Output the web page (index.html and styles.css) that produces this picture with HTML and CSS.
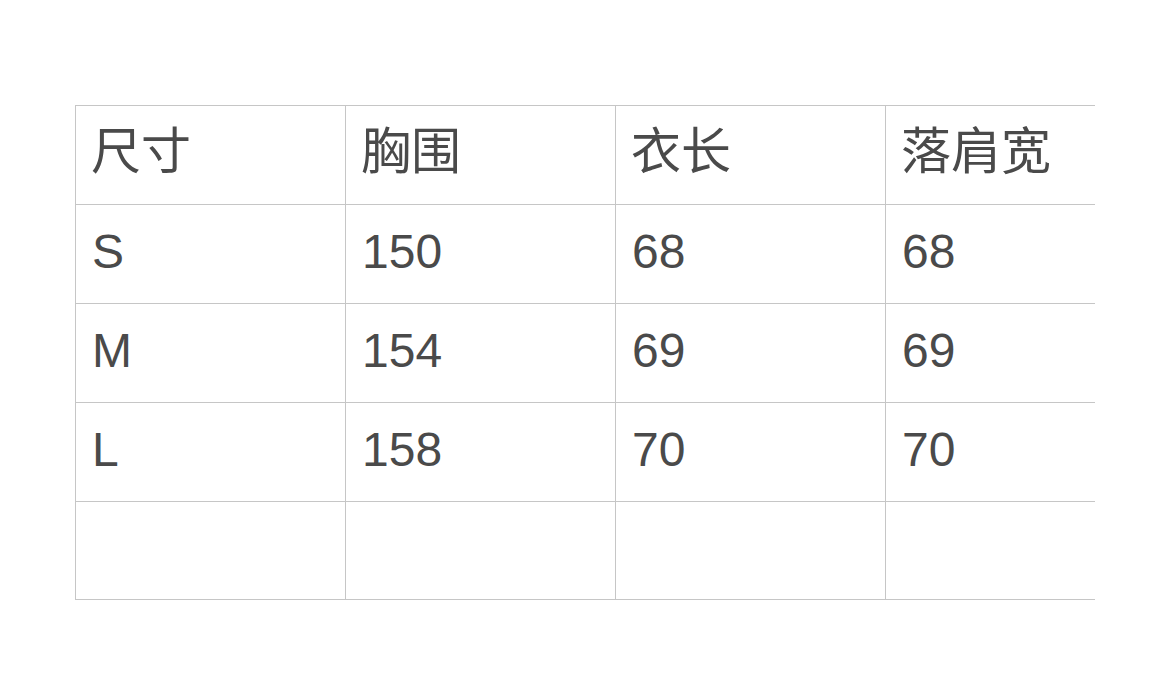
FILE: index.html
```html
<!DOCTYPE html>
<html lang="zh-CN">
<head>
<meta charset="utf-8">
<title>尺码表</title>
<link rel="stylesheet" href="styles.css">
</head>
<body>
<div class="frame">
  <table class="size-table">
    <tr class="head"><td>尺寸</td><td>胸围</td><td>衣长</td><td>落肩宽</td></tr>
    <tr><td>S</td><td>150</td><td>68</td><td>68</td></tr>
    <tr><td>M</td><td>154</td><td>69</td><td>69</td></tr>
    <tr><td>L</td><td>158</td><td>70</td><td>70</td></tr>
    <tr class="empty"><td></td><td></td><td></td><td></td></tr>
  </table>
</div>
</body>
</html>
```

FILE: styles.css
```css
html, body {
  margin: 0;
  padding: 0;
  background: #ffffff;
}
body {
  font-family: "Liberation Sans", "Noto Sans CJK SC", sans-serif;
  color: #4a4a4a;
}
.frame {
  margin-left: 75px;
  margin-top: 105px;
  width: 1020px;
  overflow: hidden;
}
.size-table {
  border-collapse: collapse;
  table-layout: fixed;
  width: 1081px;
}
.size-table td {
  width: 270px;
  height: 98px;
  box-sizing: border-box;
  border: 1px solid #c6c6c6;
  padding: 0 16px 4px 16px;
  font-size: 48px;
  line-height: 1;
  vertical-align: middle;
  white-space: nowrap;
}
.size-table tr {
  height: 99px;
}
.size-table tr.head td {
  font-family: "Noto Sans CJK SC", sans-serif;
  font-size: 50px;
  padding-left: 15px;
  padding-bottom: 16px;
}
.size-table tr.empty {
  height: 98px;
}
```
